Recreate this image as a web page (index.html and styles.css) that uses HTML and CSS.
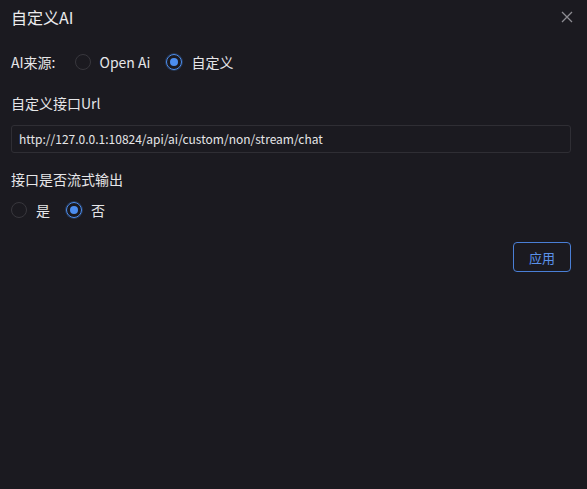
FILE: index.html
```html
<!DOCTYPE html>
<html lang="zh">
<head>
  <meta charset="UTF-8" />
  <title>自定义AI</title>
  <link rel="stylesheet" href="styles.css">
</head>
<body>
  <div class="modal">
    <div class="modal-header">
      <span class="modal-title">自定义AI</span>
      <span class="close-btn">
        <svg width="12" height="12" viewBox="0 0 12 12"><path d="M1 1L11 11M11 1L1 11" stroke="#8d8c92" stroke-width="1.3" fill="none"/></svg>
      </span>
    </div>
    <div class="row source-row">
      <span class="label">AI来源:</span>
      <label class="radio"><span class="dot"></span>Open Ai</label>
      <label class="radio checked"><span class="dot"></span>自定义</label>
    </div>
    <div class="field-title">自定义接口Url</div>
    <div class="input">http://127.0.0.1:10824/api/ai/custom/non/stream/chat</div>
    <div class="field-title">接口是否流式输出</div>
    <div class="row">
      <label class="radio"><span class="dot"></span>是</label>
      <label class="radio checked"><span class="dot"></span>否</label>
    </div>
    <div class="actions">
      <button class="apply-btn">应用</button>
    </div>
  </div>
</body>
</html>
```

FILE: styles.css
```css
body {
  margin: 0;
  padding: 0;
  background-color: #1b1a20;
  color: #e6e6e8;
  font-family: "Noto Sans CJK SC", "Noto Sans", sans-serif;
  font-size: 14px;
}
.modal {
  width: 587px;
  height: 489px;
  box-sizing: border-box;
  padding: 6px 16px 0 11px;
}
.modal-header {
  display: flex;
  align-items: center;
  justify-content: space-between;
  height: 22px;
}
.modal-title {
  font-size: 16px;
  color: #ececee;
}
.close-btn {
  display: flex;
  margin-right: -2px;
}
.row {
  display: flex;
  align-items: center;
  height: 22px;
}
.source-row {
  margin-top: 23px;
}
.label {
  margin-right: 19px;
}
.radio {
  display: flex;
  align-items: center;
  margin-right: 16px;
  color: #e6e6e8;
}
.radio .dot {
  width: 14px;
  height: 14px;
  border: 1px solid #38373d;
  border-radius: 50%;
  margin-right: 9px;
  box-sizing: content-box;
  position: relative;
}
.radio.checked .dot {
  border-color: #4c8ef0;
  box-shadow: 0 0 0 1px rgba(76, 142, 240, 0.25);
}
.radio.checked .dot::after {
  content: "";
  position: absolute;
  left: 3px;
  top: 3px;
  width: 8px;
  height: 8px;
  border-radius: 50%;
  background-color: #4c8ef0;
}
.field-title {
  margin-top: 19px;
  height: 22px;
  line-height: 22px;
}
.input {
  margin-top: 11px;
  height: 26px;
  line-height: 26px;
  border: 1px solid #2f2e34;
  border-radius: 3px;
  padding: 0 7px;
  font-size: 12px;
  color: #e6e6e8;
}
.field-title + .row {
  margin-top: 9px;
}
.input + .field-title {
  margin-top: 15px;
}
.actions {
  display: flex;
  justify-content: flex-end;
  margin-top: 21px;
}
.apply-btn {
  width: 58px;
  height: 30px;
  background: transparent;
  border: 1px solid #4a7fd6;
  border-radius: 4px;
  color: #5a92ea;
  font-family: "Noto Sans CJK SC", sans-serif;
  font-size: 13px;
  cursor: pointer;
}
```
